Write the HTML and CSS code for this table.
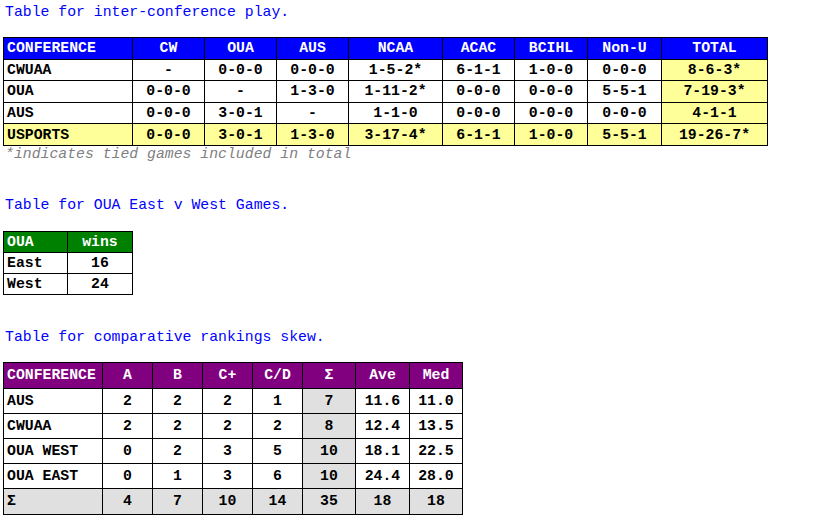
FILE: index.html
```html
<!DOCTYPE html>
<html>
<head>
<meta charset="utf-8">
<link rel="stylesheet" href="styles.css">
</head>
<body>
<p class="caption cap1">Table for inter-conference play.</p>
<table class="grid t1">
  <colgroup>
    <col class="w129"><col class="w72"><col class="w72"><col class="w72"><col class="w94"><col class="w72"><col class="w73"><col class="w74"><col class="w106">
  </colgroup>
  <tr class="head blue"><th class="left">CONFERENCE</th><th>CW</th><th>OUA</th><th>AUS</th><th>NCAA</th><th>ACAC</th><th>BCIHL</th><th>Non-U</th><th>TOTAL</th></tr>
  <tr><td class="left">CWUAA</td><td>-</td><td>0-0-0</td><td>0-0-0</td><td>1-5-2*</td><td>6-1-1</td><td>1-0-0</td><td>0-0-0</td><td class="yel">8-6-3*</td></tr>
  <tr><td class="left">OUA</td><td>0-0-0</td><td>-</td><td>1-3-0</td><td>1-11-2*</td><td>0-0-0</td><td>0-0-0</td><td>5-5-1</td><td class="yel">7-19-3*</td></tr>
  <tr><td class="left">AUS</td><td>0-0-0</td><td>3-0-1</td><td>-</td><td>1-1-0</td><td>0-0-0</td><td>0-0-0</td><td>0-0-0</td><td class="yel">4-1-1</td></tr>
  <tr class="yelrow"><td class="left">USPORTS</td><td>0-0-0</td><td>3-0-1</td><td>1-3-0</td><td>3-17-4*</td><td>6-1-1</td><td>1-0-0</td><td>5-5-1</td><td>19-26-7*</td></tr>
</table>
<p class="note">*indicates tied games included in total</p>

<p class="caption cap2">Table for OUA East v West Games.</p>
<table class="grid t2">
  <colgroup><col class="w64"><col class="w65"></colgroup>
  <tr class="head green"><th class="left">OUA</th><th>wins</th></tr>
  <tr><td class="left">East</td><td>16</td></tr>
  <tr><td class="left">West</td><td>24</td></tr>
</table>

<p class="caption cap3">Table for comparative rankings skew.</p>
<table class="grid t3">
  <colgroup>
    <col class="w99"><col class="w50"><col class="w50"><col class="w50"><col class="w50"><col class="w53"><col class="w54"><col class="w53">
  </colgroup>
  <tr class="head purple"><th class="left">CONFERENCE</th><th>A</th><th>B</th><th>C+</th><th>C/D</th><th>&Sigma;</th><th>Ave</th><th>Med</th></tr>
  <tr><td class="left">AUS</td><td>2</td><td>2</td><td>2</td><td>1</td><td class="grey">7</td><td>11.6</td><td>11.0</td></tr>
  <tr><td class="left">CWUAA</td><td>2</td><td>2</td><td>2</td><td>2</td><td class="grey">8</td><td>12.4</td><td>13.5</td></tr>
  <tr><td class="left">OUA WEST</td><td>0</td><td>2</td><td>3</td><td>5</td><td class="grey">10</td><td>18.1</td><td>22.5</td></tr>
  <tr><td class="left">OUA EAST</td><td>0</td><td>1</td><td>3</td><td>6</td><td class="grey">10</td><td>24.4</td><td>28.0</td></tr>
  <tr class="greyrow"><td class="left">&Sigma;</td><td>4</td><td>7</td><td>10</td><td>14</td><td>35</td><td>18</td><td>18</td></tr>
</table>
</body>
</html>
```

FILE: styles.css
```css
html, body {
  margin: 0;
  padding: 0;
  background: #ffffff;
}
body {
  padding: 0 3px;
  font-family: "Liberation Mono", "Courier New", monospace;
  font-size: 14.8px;
  color: #000;
}
.caption {
  margin: 0;
  padding-left: 2px;
  color: #0000ff;
  line-height: 16px;
}
.cap1 { padding-top: 4px; margin-bottom: 17px; }
.cap2 { margin-top: 35px; margin-bottom: 18px; }
.cap3 { margin-top: 34px; margin-bottom: 17px; }
.note {
  margin: 0;
  padding-left: 2px;
  line-height: 16px;
  font-style: italic;
  color: #808080;
}
.grid {
  border-collapse: collapse;
  table-layout: fixed;
  font-weight: bold;
}
.grid th, .grid td {
  border: 1px solid #000;
  padding: 0 3px;
  text-align: center;
  white-space: nowrap;
  overflow: hidden;
}
.grid th { font-weight: bold; color: #fff; }
.grid .left { text-align: left; }
.t1 { width: 764px; }
.t1 th, .t1 td { height: 20.6px; line-height: 16px; }
.t2 { width: 129px; }
.t2 th, .t2 td { height: 20px; line-height: 16px; }
.t3 { width: 459px; }
.t3 th, .t3 td { height: 24.2px; line-height: 16px; }
.t3 .head th { height: 24.6px; }
.blue th { background: #0000ff; }
.green th { background: #008000; }
.purple th { background: #800080; }
.yel, .yelrow td { background: #ffff99; }
.grey, .greyrow td { background: #e0e0e0; }
.w129 { width: 129px; }
.w72 { width: 72px; }
.w73 { width: 73px; }
.w74 { width: 74px; }
.w94 { width: 94px; }
.w106 { width: 106px; }
.w64 { width: 64px; }
.w65 { width: 65px; }
.w99 { width: 99px; }
.w50 { width: 50px; }
.w53 { width: 53px; }
.w54 { width: 54px; }
```
